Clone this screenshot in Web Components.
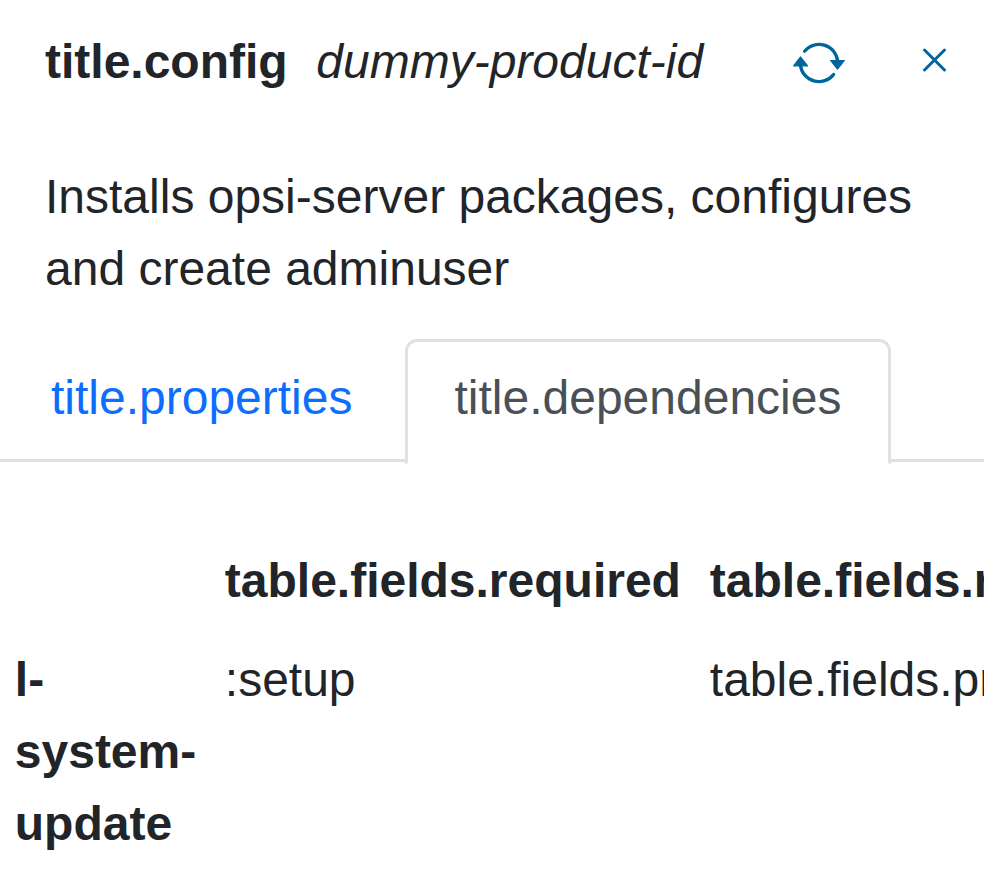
<!DOCTYPE html>
<html lang="en"><head><meta charset="utf-8"><title>Product config</title>
<style>html,body{margin:0;height:882px;overflow:hidden;background:#fff}</style></head>
<body><product-config></product-config>
<script>
const define = (name, html) => customElements.define(name, class extends HTMLElement {
  constructor() { super(); this.attachShadow({mode: 'open'}).innerHTML = html; }
});
define('refresh-icon', `<style>:host{display:block;width:54px;height:48px}svg{display:block}</style>
<svg width="54" height="48" viewBox="0 0 54 48" fill="none" stroke="#00659d" stroke-width="3.3" stroke-linecap="round" stroke-linejoin="round">
<path d="M12.6 12.3A18.6 18.6 0 0 1 45.6 22M41.600 35.400A18.6 18.6 0 0 1 8.400 26"/>
<path d="M38.600 21.500H52.400L45.500 30.200ZM1.600 26.800H15.600L8.400 18Z" fill="#00659d" stroke-width="1.2"/></svg>`);
define('close-icon', `<style>:host{display:block;width:26px;height:26px}svg{display:block}</style>
<svg width="26" height="26" viewBox="0 0 26 26" stroke="#00659d" stroke-width="3" stroke-linecap="round"><path d="M3.500 3L23.500 23M23.500 3L3.500 23"/></svg>`);
define('config-header', `<style>:host{display:flex;height:72px;padding:26px 37px 0 45px;align-items:flex-start;white-space:nowrap}
b{margin-right:28.700px}refresh-icon{margin:13px 0 0 auto}close-icon{margin:21px 0 0 75px}</style>
<b><slot name="title"></slot></b><i><slot name="product"></slot></i><refresh-icon></refresh-icon><close-icon></close-icon>`);
define('product-description', `<style>:host{display:block;padding:63px 45px 0}</style><slot></slot>`);
define('nav-tab', `<style>:host{display:block;box-sizing:border-box;height:126px;margin-right:3px;border:3px solid transparent;padding:20px 46.5px;color:#0d6efd}
:host([active]){color:#495057;background:#fff;border-color:#dee2e6 #dee2e6 #fff;border-radius:12px 12px 0 0}</style><slot></slot>`);
define('nav-tabs', `<style>:host{display:flex;height:120px;margin-top:34px;padding-left:1.5px;border-bottom:3px solid #dee2e6}</style><slot></slot>`);
define('dependency-table', `<style>:host{display:block;margin-top:83px}
div{display:grid;width:1300px;grid-template-columns:210px 485px 1fr;row-gap:27px}
div>*{padding:0 14.8px}</style>
<div><span></span><b>table.fields.required</b><b>table.fields.required</b><b>l-<br>system-<br>update</b><span>:setup</span><span>table.fields.prerequired</span></div>`);
define('product-config', `<style>:host{display:block;width:984px;height:882px;overflow:hidden;background:#fff;color:#212529;font:48px/72px "Liberation Sans",sans-serif}</style>
<config-header><span slot="title">title.config</span><span slot="product">dummy-product-id</span></config-header>
<product-description>Installs opsi-server packages, configures and create adminuser</product-description>
<nav-tabs><nav-tab>title.properties</nav-tab><nav-tab active>title.dependencies</nav-tab></nav-tabs>
<dependency-table></dependency-table>`);
</script></body></html>
